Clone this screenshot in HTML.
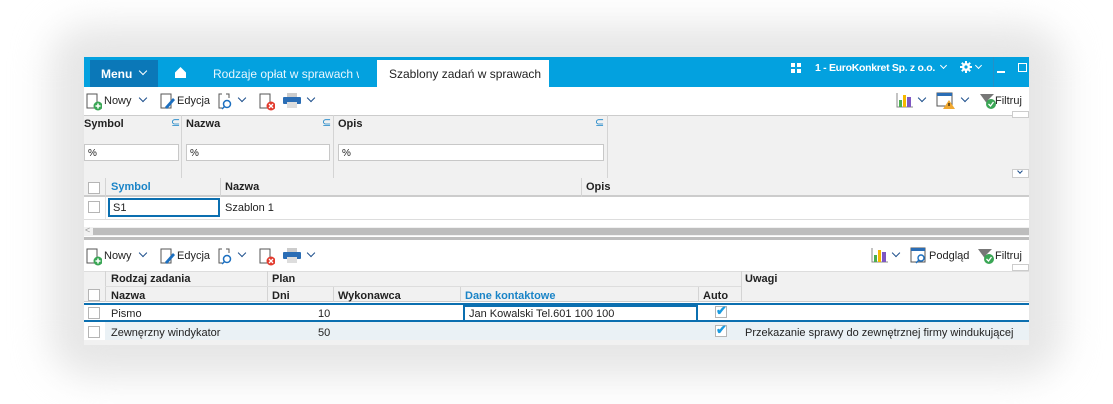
<!DOCTYPE html>
<html><head><meta charset="utf-8"><style>
*{margin:0;padding:0;box-sizing:border-box}
body{width:1113px;height:404px;background:#fff;position:relative;overflow:hidden;font-family:"Liberation Sans",sans-serif;font-size:11px;color:#222}
.a{position:absolute}
#shadow{left:50px;top:25px;width:1013px;height:352px;border-radius:40px;background:#e6e6e6;filter:blur(18px)}
#win{left:84px;top:57px;width:945px;height:288px;background:#fff;overflow:hidden}
.t{position:absolute;white-space:nowrap}
.b{font-weight:bold}
.blue{color:#1a84c7}
.vd{position:absolute;width:1px;background:#d4d4d4}
.cb{position:absolute;width:12px;height:12px;border:1px solid #b5b5b5;background:#fff}
.chev{position:absolute;width:6px;height:6px;border-right:1.5px solid #1d4f8c;border-bottom:1.5px solid #1d4f8c;transform:rotate(45deg)}
.inp{position:absolute;height:17px;background:#fff;border:1px solid #c8c8c8;padding:3px 3px;font-size:10px}
</style></head><body>
<div class="a" id="shadow"></div>
<div class="a" id="win">
 <div class="a" style="left:0;top:0;width:945px;height:30px;background:#03a1df"></div>
 <div class="a" style="left:6px;top:3px;width:68px;height:27px;background:#0b78b8"></div>
 <div class="t b" style="left:17px;top:10px;color:#fff;font-size:12px">Menu</div>
 <div class="chev" style="left:56px;top:11px;border-color:#fff;width:6px;height:6px"></div>
 <svg class="a" style="left:90px;top:9px" width="13" height="13" viewBox="0 0 13 13"><path d="M6.5 1 L12 6.5 V12 H1 V6.5 Z" fill="#fff"/></svg>
 <div class="t" style="left:129px;top:10px;color:#e9f6fd;font-size:12px;width:146px;overflow:hidden">Rodzaje opłat w sprawach w</div>
 <div class="a" style="left:293px;top:3px;width:172px;height:27px;background:#fff"></div>
 <div class="t" style="left:305px;top:10px;color:#222;font-size:12px;width:155px;overflow:hidden">Szablony zadań w sprawach</div>
 <div class="a" style="left:707px;top:6px;width:4px;height:4px;background:#fff;box-shadow:6px 0 #fff,0 6px #fff,6px 6px #fff"></div>
 <div class="t b" style="left:731px;top:5px;color:#fff;font-size:10.5px;letter-spacing:-0.3px">1 - EuroKonkret Sp. z o.o.</div>
 <div class="chev" style="left:857px;top:6px;border-color:#fff;width:5px;height:5px;border-width:0 1px 1px 0"></div>
 <svg class="a" style="left:876px;top:4px" width="12" height="12" viewBox="0 0 12 12"><circle cx="6" cy="6" r="4" fill="#fff"/><path d="M6 0V12M0 6H12M1.8 1.8L10.2 10.2M10.2 1.8L1.8 10.2" stroke="#fff" stroke-width="2"/><circle cx="6" cy="6" r="1.6" fill="#03a1df"/></svg>
 <div class="chev" style="left:892px;top:6px;border-color:#fff;width:5px;height:5px;border-width:0 1px 1px 0"></div>
 <div class="a" style="left:909px;top:0;width:1px;height:30px;background:#2590c7"></div>
 <div class="a" style="left:913px;top:14px;width:8px;height:1.5px;background:#fff"></div>
 <div class="a" style="left:934px;top:6px;width:9px;height:9px;border:1.5px solid #fff"></div>

 <div class="a" style="left:0;top:58px;width:945px;height:63px;background:#f1f1f1;border-top:1px solid #ccc"></div>
 <div class="vd" style="left:97px;top:58px;height:63px"></div>
 <div class="vd" style="left:249px;top:58px;height:63px"></div>
 <div class="vd" style="left:523px;top:58px;height:63px"></div>
 <div class="t b" style="left:0;top:61px">Symbol</div><div class="t blue" style="left:87px;top:59px">⊆</div>
 <div class="t b" style="left:102px;top:61px">Nazwa</div><div class="t blue" style="left:238px;top:59px">⊆</div>
 <div class="t b" style="left:254px;top:61px">Opis</div><div class="t blue" style="left:511px;top:59px">⊆</div>
 <div class="inp" style="left:0;top:87px;width:95px">%</div>
 <div class="inp" style="left:102px;top:87px;width:144px">%</div>
 <div class="inp" style="left:254px;top:87px;width:266px">%</div>
 <div class="a" style="left:928px;top:54px;width:17px;height:7px;border:1px solid #ccc;background:#fff"></div>
 <div class="a" style="left:928px;top:112px;width:17px;height:9px;border:1px solid #ccc;background:#fff"></div>
 <div class="chev" style="left:934px;top:112px;width:4px;height:4px;border-width:1px"></div>
 <div class="a" style="left:0;top:121px;width:945px;height:19px;background:#f1f1f1;border-bottom:2px solid #ccc"></div>
 <div class="vd" style="left:21px;top:121px;height:19px"></div>
 <div class="vd" style="left:136px;top:121px;height:19px"></div>
 <div class="vd" style="left:497px;top:121px;height:19px"></div>
 <div class="cb" style="left:4px;top:125px"></div>
 <div class="t b blue" style="left:27px;top:124px">Symbol</div>
 <div class="t b" style="left:141px;top:124px">Nazwa</div>
 <div class="t b" style="left:502px;top:124px">Opis</div>
 <div class="cb" style="left:4px;top:144px"></div>
 <div class="a" style="left:21px;top:140px;width:1px;height:22px;background:#e4e4e4"></div>
 <div class="a" style="left:24px;top:141px;width:112px;height:19px;border:2px solid #0b6fb0;padding:2px 3px;font-size:11px">S1</div>
 <div class="t" style="left:141px;top:145px">Szablon 1</div>
 <div class="a" style="left:0;top:162px;width:945px;height:1px;background:#ddd"></div>
 <div class="a" style="left:0;top:170px;width:945px;height:9px;background:#f1f1f1"></div>
 <div class="t" style="left:1px;top:168px;color:#999;font-size:9px">&lt;</div>
 <div class="a" style="left:9px;top:171px;width:936px;height:7px;background:#bdbdbd"></div>
 <div class="a" style="left:0;top:180px;width:945px;height:3px;background:#bdbdbd"></div>
 <div class="a" style="left:0;top:214px;width:945px;height:31px;background:#f1f1f1;border-top:1px solid #ddd;border-bottom:1px solid #ccc"></div>
 <div class="vd" style="left:21px;top:214px;height:31px"></div>
 <div class="vd" style="left:183px;top:214px;height:31px"></div>
 <div class="vd" style="left:249px;top:230px;height:15px"></div>
 <div class="vd" style="left:376px;top:230px;height:15px"></div>
 <div class="vd" style="left:614px;top:230px;height:15px"></div>
 <div class="vd" style="left:657px;top:214px;height:31px"></div>
 <div class="a" style="left:21px;top:229px;width:636px;height:1px;background:#ddd"></div>
 <div class="cb" style="left:4px;top:232px"></div>
 <div class="t b" style="left:27px;top:216px">Rodzaj zadania</div>
 <div class="t b" style="left:188px;top:216px">Plan</div>
 <div class="t b" style="left:661px;top:216px">Uwagi</div>
 <div class="t b" style="left:27px;top:233px">Nazwa</div>
 <div class="t b" style="left:188px;top:233px">Dni</div>
 <div class="t b" style="left:254px;top:233px">Wykonawca</div>
 <div class="t b blue" style="left:381px;top:233px">Dane kontaktowe</div>
 <div class="t b" style="left:619px;top:233px">Auto</div>
 <div class="a" style="left:0;top:246px;width:945px;height:19px;border-top:2px solid #0b6fb0;border-bottom:2px solid #0b6fb0"></div>
 <div class="a" style="left:0;top:248px;width:21px;height:15px;background:#fff"></div>
 <div class="cb" style="left:4px;top:250px"></div>
 <div class="t" style="left:27px;top:251px">Pismo</div>
 <div class="t" style="left:234px;top:251px">10</div>
 <div class="a" style="left:379px;top:248px;width:235px;height:17px;border:2px solid #0b6fb0;padding:1px 4px;font-size:11px">Jan Kowalski Tel.601 100 100</div>
 <div class="cb" style="left:631px;top:249px"></div><div class="t" style="left:632px;top:246px;color:#1a9be0;font-size:13px;font-weight:bold">✔</div>
 <div class="a" style="left:0;top:265px;width:945px;height:18px;background:#eaf1f5"></div>
 <div class="a" style="left:0;top:265px;width:21px;height:18px;background:#fff"></div>
 <div class="cb" style="left:4px;top:269px"></div>
 <div class="t" style="left:27px;top:270px">Zewnęrzny windykator</div>
 <div class="t" style="left:234px;top:270px">50</div>
 <div class="cb" style="left:631px;top:268px"></div><div class="t" style="left:632px;top:265px;color:#1a9be0;font-size:13px;font-weight:bold">✔</div>
 <div class="t" style="left:661px;top:270px">Przekazanie sprawy do zewnętrznej firmy windukującej</div>
 <div class="a" style="left:0;top:283px;width:945px;height:5px;background:#f1f1f1"></div>
</div>
<div class="a" style="left:84px;top:87px;width:945px;height:28px">
 <svg class="a" style="left:2px;top:6px" width="16" height="18"><rect x="1" y="1" width="10" height="14" fill="#fff" stroke="#555"/><circle cx="12" cy="13" r="4.5" fill="#3aa655"/><path d="M12 10.5v5M9.5 13h5" stroke="#fff" stroke-width="1.5"/></svg>
 <div class="t" style="left:20px;top:8px">Nowy</div><div class="chev" style="left:56px;top:8px"></div>
 <svg class="a" style="left:76px;top:6px" width="16" height="18"><rect x="1" y="1" width="10" height="14" fill="#fff" stroke="#555"/><path d="M5 14 L13 5 L15 7 L7 16 Z" fill="#1b6fc0"/></svg>
 <div class="t" style="left:93px;top:8px">Edycja</div>
 <svg class="a" style="left:134px;top:6px" width="16" height="18"><path d="M4 1H1V15H4M8 1H11V5" fill="none" stroke="#555"/><circle cx="9" cy="11" r="3.5" fill="none" stroke="#1b6fc0" stroke-width="1.5"/><path d="M6.5 13.5L4 16" stroke="#1b6fc0" stroke-width="1.5"/></svg>
 <div class="chev" style="left:155px;top:8px"></div>
 <svg class="a" style="left:175px;top:6px" width="16" height="18"><rect x="1" y="1" width="10" height="14" fill="#fff" stroke="#555"/><circle cx="12" cy="13" r="4.5" fill="#e23b2e"/><path d="M10 11l4 4M14 11l-4 4" stroke="#fff" stroke-width="1.3"/></svg>
 <svg class="a" style="left:199px;top:6px" width="18" height="16"><rect x="4" y="0" width="10" height="5" fill="#ccc"/><rect x="0" y="4" width="18" height="7" rx="1" fill="#2a6db5"/><rect x="4" y="9" width="10" height="6" fill="#ddd"/></svg>
 <div class="chev" style="left:224px;top:8px"></div>
 <svg class="a" style="left:812px;top:5px" width="18" height="16"><path d="M1 1V15H17" stroke="#888" fill="none"/><rect x="3" y="8" width="3" height="7" fill="#4caf50"/><rect x="7" y="3" width="3" height="12" fill="#f5b800"/><rect x="11" y="5" width="4" height="10" fill="#7e57c2"/></svg>
 <div class="chev" style="left:835px;top:8px"></div>
 <svg class="a" style="left:852px;top:5px" width="20" height="18"><rect x="1" y="1" width="15" height="13" fill="#fff" stroke="#555"/><rect x="1" y="1" width="15" height="3" fill="#2a6db5"/><path d="M13 8L19 17H7Z" fill="#f0a830"/><path d="M13 11v3" stroke="#000"/></svg>
 <div class="chev" style="left:878px;top:8px"></div>
 <svg class="a" style="left:895px;top:5px" width="18" height="18"><path d="M1 2H15L9 8V13Z" fill="#777"/><circle cx="12" cy="12" r="5" fill="#3aa655"/><path d="M9.5 12l2 2 3-4" stroke="#fff" fill="none" stroke-width="1.3"/></svg>
 <div class="t" style="left:911px;top:8px">Filtruj</div>
</div>
<div class="a" style="left:84px;top:242px;width:945px;height:28px">
 <svg class="a" style="left:2px;top:6px" width="16" height="18"><rect x="1" y="1" width="10" height="14" fill="#fff" stroke="#555"/><circle cx="12" cy="13" r="4.5" fill="#3aa655"/><path d="M12 10.5v5M9.5 13h5" stroke="#fff" stroke-width="1.5"/></svg>
 <div class="t" style="left:20px;top:8px">Nowy</div><div class="chev" style="left:56px;top:8px"></div>
 <svg class="a" style="left:76px;top:6px" width="16" height="18"><rect x="1" y="1" width="10" height="14" fill="#fff" stroke="#555"/><path d="M5 14 L13 5 L15 7 L7 16 Z" fill="#1b6fc0"/></svg>
 <div class="t" style="left:93px;top:8px">Edycja</div>
 <svg class="a" style="left:134px;top:6px" width="16" height="18"><path d="M4 1H1V15H4M8 1H11V5" fill="none" stroke="#555"/><circle cx="9" cy="11" r="3.5" fill="none" stroke="#1b6fc0" stroke-width="1.5"/><path d="M6.5 13.5L4 16" stroke="#1b6fc0" stroke-width="1.5"/></svg>
 <div class="chev" style="left:155px;top:8px"></div>
 <svg class="a" style="left:175px;top:6px" width="16" height="18"><rect x="1" y="1" width="10" height="14" fill="#fff" stroke="#555"/><circle cx="12" cy="13" r="4.5" fill="#e23b2e"/><path d="M10 11l4 4M14 11l-4 4" stroke="#fff" stroke-width="1.3"/></svg>
 <svg class="a" style="left:199px;top:6px" width="18" height="16"><rect x="4" y="0" width="10" height="5" fill="#ccc"/><rect x="0" y="4" width="18" height="7" rx="1" fill="#2a6db5"/><rect x="4" y="9" width="10" height="6" fill="#ddd"/></svg>
 <div class="chev" style="left:224px;top:8px"></div>
 <svg class="a" style="left:787px;top:5px" width="18" height="16"><path d="M1 1V15H17" stroke="#888" fill="none"/><rect x="3" y="8" width="3" height="7" fill="#4caf50"/><rect x="7" y="3" width="3" height="12" fill="#f5b800"/><rect x="11" y="5" width="4" height="10" fill="#7e57c2"/></svg>
 <div class="chev" style="left:809px;top:8px"></div>
 <svg class="a" style="left:826px;top:5px" width="18" height="18"><rect x="1" y="1" width="14" height="14" fill="#fff" stroke="#555"/><rect x="1" y="1" width="14" height="3" fill="#2a6db5"/><circle cx="11" cy="11" r="3" fill="#fff" stroke="#1b6fc0" stroke-width="1.4"/><path d="M9 13l-3 3" stroke="#1b6fc0" stroke-width="1.4"/></svg>
 <div class="t" style="left:845px;top:8px">Podgląd</div>
 <svg class="a" style="left:893px;top:5px" width="18" height="18"><path d="M1 2H15L9 8V13Z" fill="#777"/><circle cx="12" cy="12" r="5" fill="#3aa655"/><path d="M9.5 12l2 2 3-4" stroke="#fff" fill="none" stroke-width="1.3"/></svg>
 <div class="t" style="left:911px;top:8px">Filtruj</div>
 <div class="a" style="left:928px;top:22px;width:17px;height:7px;border:1px solid #ccc;background:#fff"></div>
</div>
</body></html>
